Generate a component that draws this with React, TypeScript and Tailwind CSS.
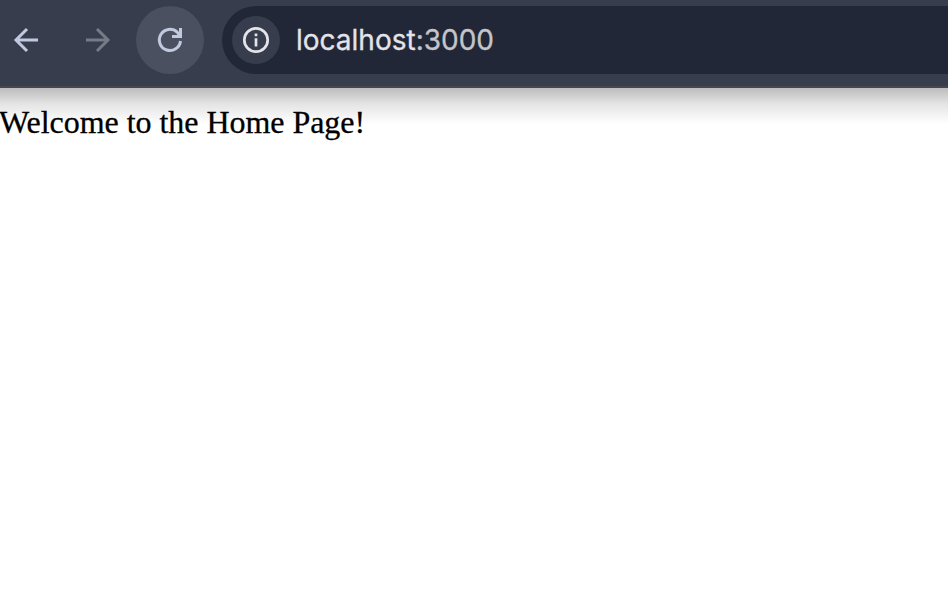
export default function App() {
  return (
    <div className="flex h-[600px] w-[948px] flex-col overflow-hidden bg-white">
      <header className="flex h-[88px] shrink-0 items-start border-b-2 border-[#47484c] bg-[#373d4d] pt-1.5">
        <nav className="flex h-[68px] shrink-0 items-center">
          <button aria-label="Back" className="ml-3 h-7 w-7">
            <svg width="28" height="28" viewBox="0 0 28 28" fill="none" stroke="#c0c9df" strokeWidth="3">
              <path d="M26 14H4M15 3L4 14l11 11" />
            </svg>
          </button>
          <button aria-label="Forward" className="ml-11 h-7 w-7">
            <svg width="28" height="28" viewBox="0 0 28 28" fill="none" stroke="#777b87" strokeWidth="3">
              <path d="M2 14H24M13 3L24 14L13 25" />
            </svg>
          </button>
          <button aria-label="Reload" className="ml-6 flex h-[68px] w-[68px] items-center justify-center rounded-full bg-[#4b5060]">
            <svg width="28" height="28" viewBox="0 0 28 28" fill="none" stroke="#c0c9df" strokeWidth="3">
              <path d="M24.5 15A10.6 10.6 0 1 1 21.2 6.2L24 9.8" />
              <path d="M24.5 2V10.5H16" />
            </svg>
          </button>
        </nav>
        <div className="ml-[18px] flex h-[68px] min-w-0 flex-1 items-center rounded-l-full bg-[#212736] pl-2.5">
          <span className="flex h-12 w-12 shrink-0 items-center justify-center rounded-full bg-[#373d4d]">
            <svg width="28" height="28" viewBox="0 0 28 28" fill="none" stroke="#e4e3e9" strokeWidth="2.7">
              <circle cx="14" cy="14" r="11.7" />
              <path d="M14 12.3v8.2M14 7.4v2.8" />
            </svg>
          </span>
          <span className="ml-4 whitespace-nowrap font-['Inter',sans-serif] text-[28px] leading-8 text-[#e4e3e9] [-webkit-text-stroke:0.3px]">
            localhost<span className="text-[#c5c5c9]">:3000</span>
          </span>
        </div>
      </header>
      <main className="flex-1 bg-linear-to-b from-[#bcbcbc] via-[#e4e4e4] via-[16px] to-white to-[36px] pt-4">
        <p className="-ml-px font-['Liberation_Serif',serif] text-[32px] leading-9 tracking-[-0.04px] text-black [-webkit-text-stroke:0.3px]">Welcome to the Home Page!</p>
      </main>
    </div>
  );
}
